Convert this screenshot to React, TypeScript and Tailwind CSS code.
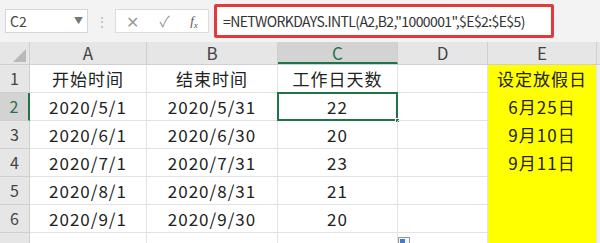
import React from "react";

const cols = [
  { key: "A", w: "w-[117px]" },
  { key: "B", w: "w-[131px]" },
  { key: "C", w: "w-[120px]" },
  { key: "D", w: "w-[90px]" },
  { key: "E", w: "w-[109px]" },
];

const rows = [
  ["开始时间", "结束时间", "工作日天数", "", "设定放假日"],
  ["2020/5/1", "2020/5/31", "22", "", "6月25日"],
  ["2020/6/1", "2020/6/30", "20", "", "9月10日"],
  ["2020/7/1", "2020/7/31", "23", "", "9月11日"],
  ["2020/8/1", "2020/8/31", "21", "", ""],
  ["2020/9/1", "2020/9/30", "20", "", ""],
  ["", "", "", "", ""],
];

export default function App() {
  return (
    <div
      className="w-[600px] h-[243px] overflow-hidden bg-white text-[#222]"
      style={{ fontFamily: '"Noto Sans CJK SC", "Noto Sans", sans-serif' }}
    >
      {/* formula bar */}
      <div className="h-[42px] bg-[#f3f3f3] flex items-center pl-[5px]">
        <div className="w-[83px] h-[24px] bg-white border border-[#d6d6d6] flex items-center justify-between px-[4px] text-[14px] text-[#444]">
          <span>C2</span>
          <span className="text-[9px] text-[#777]">▼</span>
        </div>
        <div className="w-[27px] flex justify-center text-[#b0b0b0] text-[12px] leading-none">⋮</div>
        <div className="w-[94px] h-[24px] bg-white border border-[#dcdcdc] flex items-center justify-around text-[#9a9a9a]">
          <span className="text-[16px]">✕</span>
          <span className="text-[15px]">✓</span>
          <span className="italic text-[13px] text-[#555]" style={{ fontFamily: '"Liberation Serif", serif' }}>
            f<sub className="text-[9px]">x</sub>
          </span>
        </div>
        <div className="ml-[5px] w-[340px] h-[34px] bg-white border-[3px] border-[#e0393e] rounded-[2px] flex items-center pl-[6px] text-[14px] text-[#333] tracking-[-0.6px]">
          =NETWORKDAYS.INTL(A2,B2,"1000001",$E$2:$E$5)
        </div>
      </div>

      {/* column headers */}
      <div className="flex h-[23px] bg-[#e6e6e6] border-b border-[#cfcfcf] text-[17px] leading-[22px] text-[#444]">
        <div className="w-[30px] border-r border-[#cfcfcf] flex items-end justify-end pr-[3px] pb-[2px]">
          <div className="w-0 h-0 border-l-[13px] border-l-transparent border-b-[13px] border-b-[#b9b9b9]" />
        </div>
        {cols.map((c) => (
          <div
            key={c.key}
            className={`${c.w} border-r border-[#cfcfcf] text-center ${
              c.key === "C" ? "bg-[#d3d3d3] text-[#217346] border-b-2 border-b-[#217346]" : ""
            }`}
          >
            {c.key}
          </div>
        ))}
        <div className="flex-1" />
      </div>

      {/* rows */}
      {rows.map((r, i) => (
        <div key={i} className="flex h-[28px] text-[17px] leading-[27px] tracking-[1px]">
          <div
            className={`w-[30px] text-center text-[16px] tracking-normal border-b border-r text-[#444] ${
              i === 1
                ? "bg-[#d3d3d3] border-r-2 border-r-[#217346] text-[#217346] border-b-[#cfcfcf]"
                : "bg-[#e6e6e6] border-[#cfcfcf]"
            }`}
          >
            {i < 6 ? i + 1 : ""}
          </div>
          {r.map((v, j) => {
            const isE = j === 4;
            const sel = i === 1 && j === 2;
            return (
              <div
                key={j}
                className={`${cols[j].w} relative text-center ${
                  isE ? "bg-[#ffff00] border-r border-[#e3e3e3]" : "border-r border-b border-[#e3e3e3]"
                }`}
              >
                {v}
                {sel && (
                  <div className="absolute -left-[1px] -top-[1px] -right-[1px] -bottom-[1px] border-2 border-[#217346]">
                    <div className="absolute -right-[4px] -bottom-[4px] w-[5px] h-[5px] bg-[#217346] border border-white" />
                  </div>
                )}
                {i === 6 && j === 3 && (
                  <div className="absolute left-[0px] top-[4px] w-[12px] h-[9px] border border-[#9a9a9a] bg-[#f4f6fa]">
                    <div className="w-[5px] h-[5px] bg-[#4a78c8] m-[1px]" />
                  </div>
                )}
              </div>
            );
          })}
          <div className="flex-1 bg-[#f0f0f0]" />
        </div>
      ))}
    </div>
  );
}
